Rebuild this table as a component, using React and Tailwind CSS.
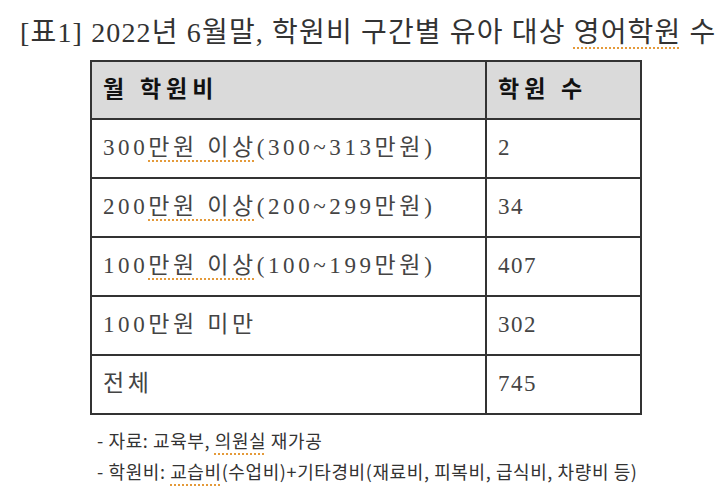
import React from 'react';

const serif = { fontFamily: '"Liberation Serif", "Noto Sans CJK KR", serif' };
const sans = { fontFamily: '"Noto Sans CJK KR", "Noto Sans", sans-serif' };

const Squiggle = ({ children }) => (
  <span className="underline decoration-dotted decoration-[#e49a3a] decoration-2 underline-offset-[5px]">
    {children}
  </span>
);

const rows = [
  { label: <><span>300</span><Squiggle>만원 이상</Squiggle>(300~313만원)</>, count: '2' },
  { label: <><span>200</span><Squiggle>만원 이상</Squiggle>(200~299만원)</>, count: '34' },
  { label: <><span>100</span><Squiggle>만원 이상</Squiggle>(100~199만원)</>, count: '407' },
  { label: '100만원 미만', count: '302' },
  { label: '전체', count: '745' },
];

const App = () => {
  return (
    <div className="w-[724px] h-[493px] bg-white overflow-hidden">
      {/* Title */}
      <div
        className="pt-[14px] pl-[20px] text-[28px] leading-[37px] text-[#333] whitespace-nowrap tracking-[1.15px]"
        style={serif}
      >
        [표1] 2022년 6월말, 학원비 구간별 유아 대상 <Squiggle>영어학원</Squiggle> 수
      </div>

      {/* Table */}
      <table
        className="ml-[90px] mt-[9px] w-[552px] border-collapse border-2 border-[#333]"
        style={serif}
      >
        <thead>
          <tr className="h-[58px] bg-[#dadada]">
            <th className="w-[395px] border-2 border-[#333] pl-[11px] text-left text-[23px] font-bold text-[#111] tracking-[5px]">
              월 학원비
            </th>
            <th className="border-2 border-[#333] pl-[11px] text-left text-[23px] font-bold text-[#111] tracking-[5px]">
              학원 수
            </th>
          </tr>
        </thead>
        <tbody>
          {rows.map((r, i) => (
            <tr key={i} className="h-[59px]">
              <td className="border-2 border-[#333] pl-[11px] text-[23px] text-[#444] tracking-[3.6px] whitespace-nowrap">
                {r.label}
              </td>
              <td className="border-2 border-[#333] pl-[11px] text-[23px] text-[#444] tracking-[1.5px]">
                {r.count}
              </td>
            </tr>
          ))}
        </tbody>
      </table>

      {/* Notes */}
      <div className="pl-[97px] pt-[10px] text-[18px] leading-[31px] text-[#333] tracking-[0.6px]" style={sans}>
        <div>- 자료: 교육부, <Squiggle>의원실</Squiggle> 재가공</div>
        <div className="whitespace-nowrap">
          - 학원비: <Squiggle>교습비</Squiggle>(수업비)+기타경비(재료비, 피복비, 급식비, 차량비 등)
        </div>
      </div>
    </div>
  );
};

export default App;
